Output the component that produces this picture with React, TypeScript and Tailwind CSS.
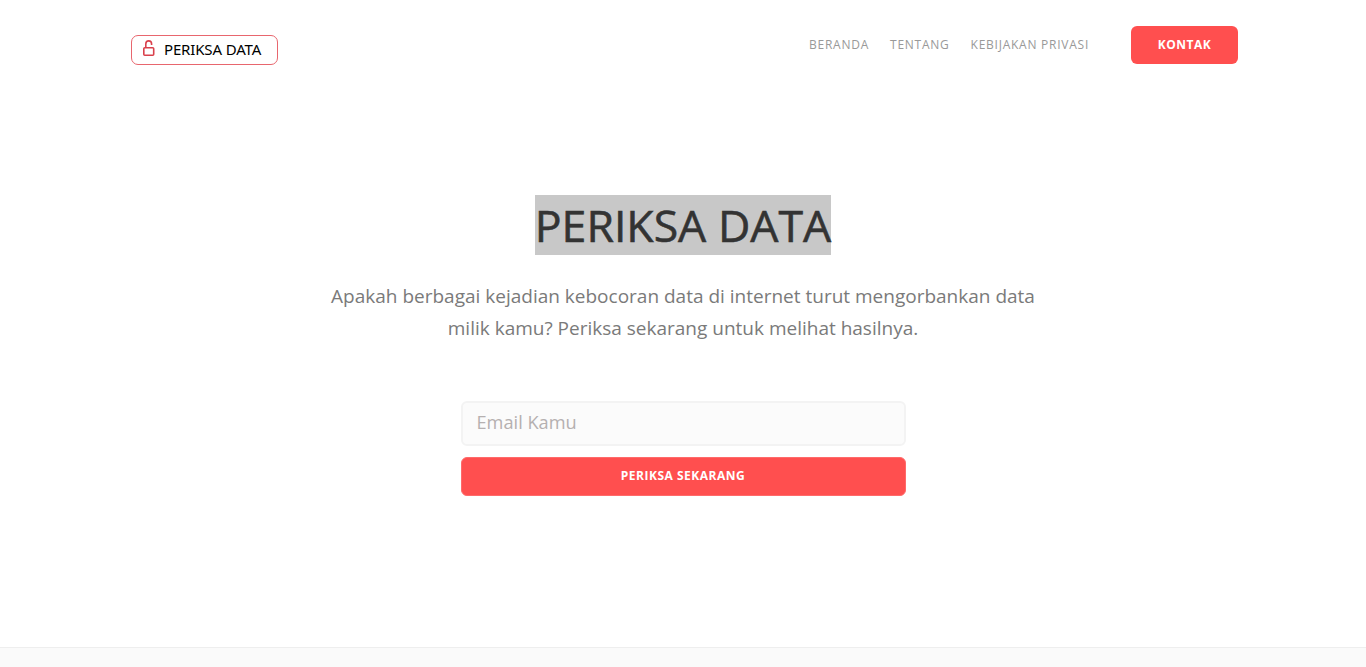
export default function App() {
  return (
    <div className="h-[667px] overflow-hidden bg-white flex flex-col font-['Open_Sans',sans-serif]">
      <header className="h-[90px] pl-[131px] pr-[128px] flex justify-between shrink-0">
        <div className="mt-[35px] w-[147px] h-[30px] rounded-[7px] border border-[#e8666e] flex items-center pl-[10px] gap-[9px]">
          <svg className="-mt-[4px]" width="13" height="16" viewBox="0 0 13 16" fill="none" stroke="#d9414c" strokeWidth="1.6">
            <rect x="1.8" y="7.8" width="9.9" height="7.4" rx="1" />
            <path d="M3.8 7.5V4C3.8 2 5 .9 6.7 .9S9.6 2 9.6 4V5" />
          </svg>
          <span className="-mt-[1px] text-[15px] leading-none text-black font-['Noto_Sans',sans-serif] tracking-[-0.15px]">PERIKSA DATA</span>
        </div>
        <nav className="mt-[26px] flex items-start">
          <a className="mt-[10px] text-[12px] leading-[18px] tracking-[0.75px] text-[#999999]">BERANDA</a>
          <a className="mt-[10px] ml-[21px] text-[12px] leading-[18px] tracking-[0.75px] text-[#999999]">TENTANG</a>
          <a className="mt-[10px] ml-[21px] text-[12px] leading-[18px] tracking-[0.75px] text-[#999999]">KEBIJAKAN PRIVASI</a>
          <button className="ml-[42px] w-[107px] h-[38px] rounded-[6px] bg-[#ff4f4f] text-white text-[12px] font-bold tracking-[0.5px]">KONTAK</button>
        </nav>
      </header>
      <main className="flex-1 flex flex-col items-center">
        <h1 className="mt-[105px] h-[60px]">
          <span className="block bg-[#c8c8c8] text-[44.6px] leading-[60px] font-normal [-webkit-text-stroke:0.6px_#333333] text-[#333333]">PERIKSA DATA</span>
        </h1>
        <p className="mt-[25px] w-[740px] text-center text-[19px] leading-[32px] text-[#7a7a7a]">
          Apakah berbagai kejadian kebocoran data di internet turut mengorbankan data<br />milik kamu? Periksa sekarang untuk melihat hasilnya.
        </p>
        <div className="mt-[57px] w-[445px] flex flex-col gap-[11px]">
          <input
            placeholder="Email Kamu"
            className="h-[45px] w-full rounded-[6px] border-2 border-[#f3f3f3] bg-[#fbfbfb] pl-[14px] pb-[4px] text-[18.2px] outline-none placeholder:text-[#b5b0b0]"
          />
          <button className="h-[39px] w-full rounded-[6px] border border-[#ff6a6a] bg-[#ff4f4f] pb-[2px] text-white text-[12px] font-bold tracking-[0.5px]">PERIKSA SEKARANG</button>
        </div>
      </main>
      <footer className="h-[20px] shrink-0 bg-[#fafafa] border-t border-[#eeeeee]" />
    </div>
  );
}
